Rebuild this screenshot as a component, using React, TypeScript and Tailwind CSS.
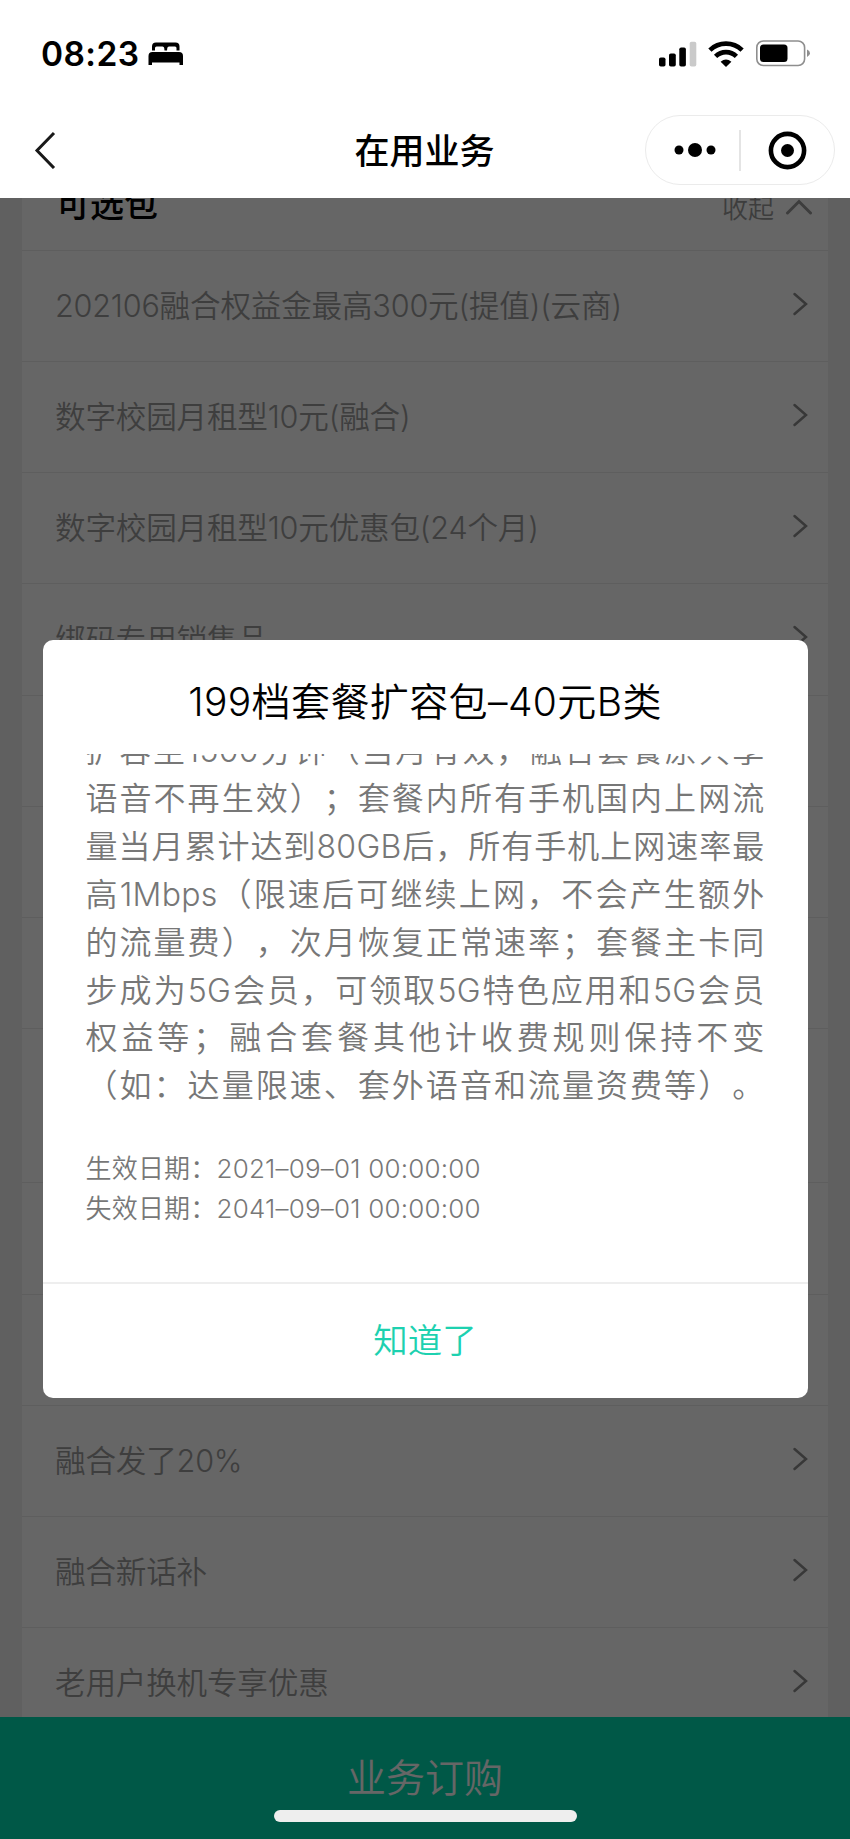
import clsx from 'clsx';

const rows = [
  { label: '202106融合权益金最高300元(提值)(云商)' },
  { label: '数字校园月租型10元(融合)' },
  { label: '数字校园月租型10元优惠包(24个月)' },
  { label: '绑码专用销售品' },
  { label: '' },
  { label: '' },
  { label: '' },
  { label: '', tall: true },
  { label: '' },
  { label: '' },
  { label: '融合发了20%' },
  { label: '融合新话补' },
  { label: '老用户换机专享优惠' },
];

const lines = [
  '扩容至1500分钟（当月有效，融合套餐原共享',
  '语音不再生效）；套餐内所有手机国内上网流',
  '量当月累计达到80GB后，所有手机上网速率最',
  '高1Mbps（限速后可继续上网，不会产生额外',
  '的流量费），次月恢复正常速率；套餐主卡同',
  '步成为5G会员，可领取5G特色应用和5G会员',
  '权益等；融合套餐其他计收费规则保持不变',
  '（如：达量限速、套外语音和流量资费等）。',
];

function StatusBar() {
  return (
    <div className="flex h-[107px] items-center justify-between pl-[41px] pr-[39px]">
      <div className="flex items-center gap-[9px]">
        <span className="font-['Inter',sans-serif] text-[33.5px] font-[580] leading-[40px] tracking-[0.4px]">08:23</span>
        <svg width="36" height="24" viewBox="0 0 36 24">
          <path d="M4 8.5V4.5Q4 0.5 8 0.5H27.5Q31.5 0.5 31.5 4.5V8.5H28.5V6Q28.5 4.5 27 4.5H21Q19.5 4.5 19.3 6L19 8.5H16.5L16.2 6Q16 4.5 14.5 4.5H8.5Q7 4.5 7 6V8.5Z" />
          <path d="M0.5 23V14Q0.5 10 4.5 10H31Q35 10 35 14V23H31.5V20.5H4V23Z" />
        </svg>
      </div>
      <div className="flex items-center">
        <svg width="38" height="26" viewBox="0 0 38 26">
          <rect x="0" y="16.5" width="6.5" height="9" rx="1.8" />
          <rect x="10" y="12.5" width="6.8" height="13" rx="1.8" />
          <rect x="20.3" y="6.5" width="6.6" height="19" rx="1.8" />
          <rect x="30.7" y="0.8" width="6.6" height="24.7" rx="1.8" fill="#cacaca" />
        </svg>
        <svg className="ml-[11px]" width="36" height="26" viewBox="0 0 36 26" fill="none" stroke="#000" strokeWidth="4.7">
          <path d="M1.9 9.1A23.5 23.5 0 0 1 34.1 9.1" />
          <path d="M7.6 15.4A15 15 0 0 1 28.4 15.4" />
          <path d="M18 26L12.6 20.7Q18 16.2 23.4 20.7Z" fill="#000" stroke="none" />
        </svg>
        <svg className="ml-[12px]" width="55" height="27" viewBox="0 0 55 27">
          <rect x="0.8" y="1" width="47.8" height="24.5" rx="6.5" fill="none" stroke="#8e8e8e" strokeWidth="1.6" />
          <rect x="4" y="4.5" width="27.5" height="17.5" rx="3.5" />
          <path d="M51 9.5Q54 10.8 54 13.2T51 17Z" fill="#8e8e8e" />
        </svg>
      </div>
    </div>
  );
}

function NavBar() {
  return (
    <div className="grid h-[91px] grid-cols-3 items-start pr-[15px] pt-2">
      <svg className="ml-[33px] mt-[16px]" width="24" height="38" viewBox="0 0 24 38" fill="none" stroke="#191919" strokeWidth="3">
        <path d="M21 2L4 19.5L21 37" />
      </svg>
      <h1 className="mt-[11px] pl-[14px] text-center text-[35px] font-medium leading-[50px]">在用业务</h1>
      <div className="flex h-[70px] w-[190px] items-center justify-self-end rounded-full border border-[#ebebeb]">
        <svg className="ml-[28px]" width="42" height="16" viewBox="0 0 42 16">
          <circle cx="5" cy="8" r="4.5" />
          <circle cx="21" cy="8" r="7" />
          <circle cx="37" cy="8" r="4.5" />
        </svg>
        <div className="ml-[23px] h-[41px] w-[1.5px] bg-[#e4e4e4]" />
        <svg className="ml-[27px]" width="39" height="39" viewBox="0 0 39 39">
          <circle cx="19.5" cy="19.5" r="16.6" fill="none" stroke="#000" strokeWidth="4.6" />
          <circle cx="19.5" cy="19.5" r="6.5" />
        </svg>
      </div>
    </div>
  );
}

function PackageList() {
  return (
    <div className="h-[1519px] overflow-hidden bg-[#f0f0f0] px-[22px]">
      <div className="bg-white">
        <div className="flex h-[53px] items-end justify-between border-b border-[#ececec] pb-[20px] pl-[34px] pr-[16px]">
          <h2 className="text-[34px] font-medium leading-[50px]">可选包</h2>
          <div className="flex items-center gap-[11px] text-[26px] leading-[43px] text-[#999]">
            收起
            <svg width="27" height="20" viewBox="0 0 27 20" fill="none" stroke="currentColor" strokeWidth="3" strokeLinecap="round">
              <path d="M2.5 14L14 2.5L25.5 14" />
            </svg>
          </div>
        </div>
        {rows.map((row, i) => (
          <div
            key={i}
            className={clsx(
              'flex items-center justify-between border-b border-[#ececec] pl-[33px] pr-[20px]',
              row.tall ? 'h-[154.4px]' : 'h-[111.15px]'
            )}
          >
            <span className="text-[30.6px] tracking-[-0.2px] text-[#9c9c9c]">{row.label}</span>
            <svg className="mb-[4px]" width="16" height="24" viewBox="0 0 16 24" fill="none" stroke="#8c8c8c" strokeWidth="2.5" strokeLinecap="round">
              <path d="M2.5 2L14 12L2.5 22" />
            </svg>
          </div>
        ))}
      </div>
    </div>
  );
}

function PackageDialog() {
  return (
    <div className="flex h-[758px] w-[765px] flex-col overflow-hidden rounded-[10px] bg-white">
      <h3 className="h-[114px] pt-[34px] text-center text-[39px] leading-[56px] tracking-[0.4px] text-black">199档套餐扩容包–40元B类</h3>
      <div className="flex-1 overflow-hidden px-[43px] text-[#777]">
        <div className="-mt-[27px] text-[32px] leading-[47.9px] tracking-[0.3px] [text-spacing-trim:space-all]">
          {lines.map((line) => (
            <p key={line} className="whitespace-nowrap [text-align-last:justify]">{line}</p>
          ))}
        </div>
        <div className="mt-[39px] text-[26px] leading-[39.3px] tracking-[0.2px]">
          <p>生效日期：2021–09–01 00:00:00</p>
          <p>失效日期：2041–09–01 00:00:00</p>
        </div>
      </div>
      <button className="h-[116px] border-t-2 border-[#eee] pb-[1px] text-[34.5px] text-[#1dd1b0]">知道了</button>
    </div>
  );
}

export default function App() {
  return (
    <div className="relative h-[1839px] w-[850px] overflow-hidden bg-white font-['Inter','Noto_Sans_CJK_SC',sans-serif] font-[350] text-black">
      <header className="h-[198px]">
        <StatusBar />
        <NavBar />
      </header>
      <PackageList />
      <footer className="h-[122px] bg-[#00dcb2] pt-[34px] text-center text-[39px] leading-[54px] text-white">业务订购</footer>

      {/* mask with the dialog on top */}
      <div className="absolute inset-x-0 bottom-0 top-[198px] flex justify-center bg-black/60 pt-[442px]">
        <PackageDialog />
      </div>
      {/* home indicator */}
      <div className="absolute bottom-[17px] left-[274px] h-[12px] w-[303px] rounded-full bg-[#eee]" />
    </div>
  );
}
